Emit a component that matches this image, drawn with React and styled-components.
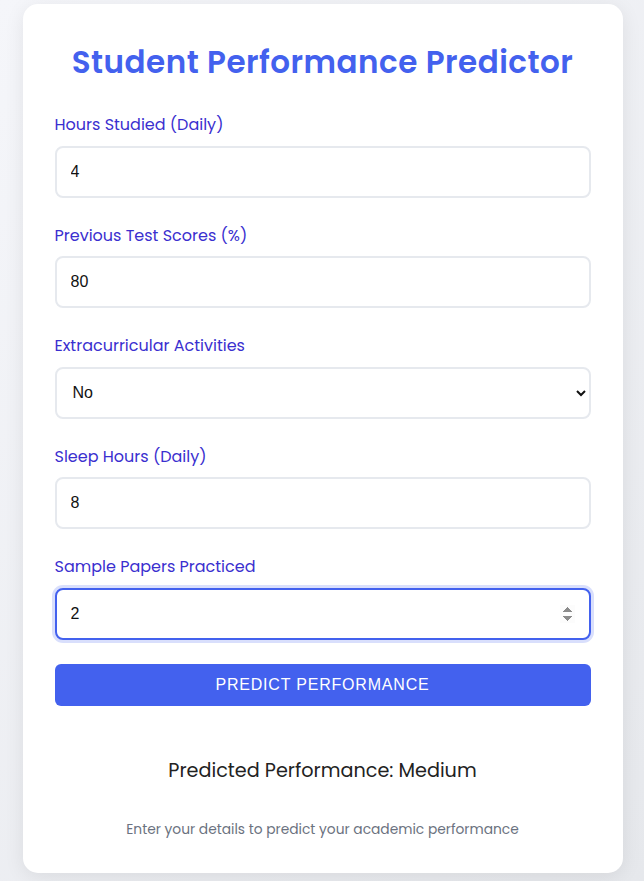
import styled, { createGlobalStyle } from "styled-components";
import { useState } from "react";

const GlobalStyle = createGlobalStyle`
  html, body {
    margin: 0;
    padding: 0;
  }
  body {
    font-family: "Poppins", "Inter", "Open Sans", sans-serif;
    background: linear-gradient(135deg, #f5f6fa 0%, #e6e8ec 100%);
    min-height: 881px;
  }
`;

const Page = styled.div`
  padding-top: 4px;
  display: flex;
  justify-content: center;
`;

const Card = styled.div`
  width: 600px;
  box-sizing: border-box;
  margin-left: 1px;
  background: #fff;
  border-radius: 15px;
  box-shadow: 0 4px 20px rgba(0, 0, 0, 0.08);
  padding: 35px 32px 34px;
  height: 869px;
`;

const Title = styled.h1`
  margin: 0 0 27px;
  text-align: center;
  color: #4361ee;
  font-size: 31px;
  font-weight: 600;
  letter-spacing: 0.5px;
`;

const Group = styled.div`
  margin-bottom: 26px;
`;

const Label = styled.label`
  display: block;
  color: #3a2fcf;
  font-size: 16px;
  margin-bottom: 8.5px;
  line-height: 24px;
`;

const Field = styled.input`
  width: 100%;
  box-sizing: border-box;
  height: 52px;
  padding: 0 14px;
  border: 2px solid #e6e9ee;
  border-radius: 8px;
  font-family: "Liberation Sans", Arial, sans-serif;
  font-size: 16px;
  color: #111;
  background: #fff;
  outline: none;

  &:focus {
    border-color: #4361ee;
    box-shadow: 0 0 0 3px rgba(67, 97, 238, 0.2);
  }
`;

const Select = styled.select`
  width: 100%;
  box-sizing: border-box;
  height: 52px;
  padding: 0 12px;
  border: 2px solid #e6e9ee;
  border-radius: 8px;
  font-family: "Liberation Sans", Arial, sans-serif;
  font-size: 16px;
  color: #111;
  background: #fff;
  outline: none;
`;

const Button = styled.button`
  width: 100%;
  height: 42px;
  margin-top: -2px;
  border: none;
  border-radius: 6px;
  background: #4361ee;
  color: #fff;
  font-family: "Liberation Sans", Arial, sans-serif;
  font-size: 16px;
  font-weight: 400;
  letter-spacing: 0.8px;
  cursor: pointer;
`;

const Result = styled.div`
  margin-top: 50px;
  text-align: center;
  font-size: 19.2px;
  color: #222;
`;

const Footer = styled.p`
  margin: 35px 0 0;
  text-align: center;
  font-size: 13.8px;
  color: #6b7280;
`;

const App = () => {
  const [values, setValues] = useState({
    hours: "4",
    scores: "80",
    extra: "No",
    sleep: "8",
    papers: "2",
  });

  const update = (key) => (e) => setValues({ ...values, [key]: e.target.value });

  return (
    <>
      <GlobalStyle />
      <Page>
        <Card>
          <Title>Student Performance Predictor</Title>
          <Group>
            <Label>Hours Studied (Daily)</Label>
            <Field type="text" value={values.hours} onChange={update("hours")} />
          </Group>
          <Group>
            <Label>Previous Test Scores (%)</Label>
            <Field type="text" value={values.scores} onChange={update("scores")} />
          </Group>
          <Group>
            <Label>Extracurricular Activities</Label>
            <Select value={values.extra} onChange={update("extra")}>
              <option>No</option>
              <option>Yes</option>
            </Select>
          </Group>
          <Group>
            <Label>Sleep Hours (Daily)</Label>
            <Field type="text" value={values.sleep} onChange={update("sleep")} />
          </Group>
          <Group>
            <Label>Sample Papers Practiced</Label>
            <Field
              type="number"
              autoFocus
              value={values.papers}
              onChange={update("papers")}
            />
          </Group>
          <Button>PREDICT PERFORMANCE</Button>
          <Result>Predicted Performance: Medium</Result>
          <Footer>Enter your details to predict your academic performance</Footer>
        </Card>
      </Page>
    </>
  );
};

export default App;
